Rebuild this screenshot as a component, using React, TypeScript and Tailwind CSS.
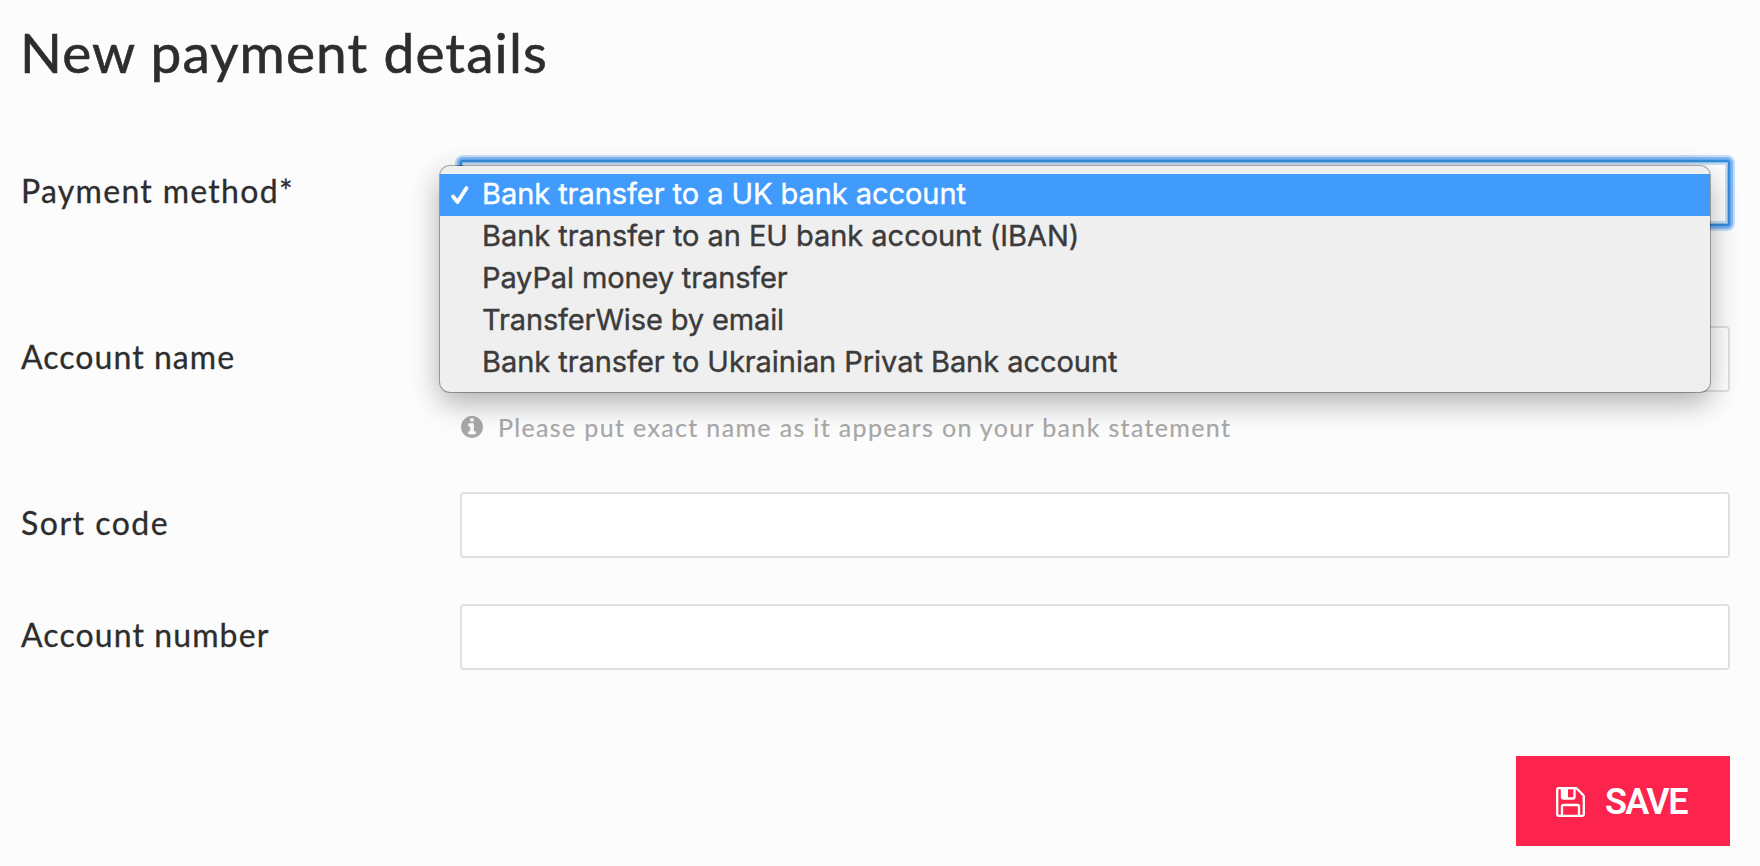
import React from 'react';

const methods = [
  { label: 'Bank transfer to a UK bank account', spacing: 'tracking-[-0.06px]' },
  { label: 'Bank transfer to an EU bank account (IBAN)', spacing: 'tracking-[-0.04px]' },
  { label: 'PayPal money transfer', spacing: 'tracking-[-0.13px]' },
  { label: 'TransferWise by email', spacing: 'tracking-[-0.13px]' },
  { label: 'Bank transfer to Ukrainian Privat Bank account', spacing: 'tracking-[-0.05px]' },
];

const InfoIcon: React.FC = () => (
  <svg viewBox="128 128 1536 1536" className="w-[22px] h-[22px]" fill="currentColor">
    <path d="M1152 1376v-160q0-14-9-23t-23-9h-96v-512q0-14-9-23t-23-9h-320q-14 0-23 9t-9 23v160q0 14 9 23t23 9h96v320h-96q-14 0-23 9t-9 23v160q0 14 9 23t23 9h448q14 0 23-9t9-23zm-128-896v-160q0-14-9-23t-23-9h-192q-14 0-23 9t-9 23v160q0 14 9 23t23 9h192q14 0 23-9t9-23zm640 416q0 209-103 385.5t-279.5 279.5-385.5 103-385.5-103-279.5-279.5-103-385.5 103-385.5 279.5-279.5 385.5-103 385.5 103 279.5 279.5 103 385.5z" />
  </svg>
);

const SaveIcon: React.FC = () => (
  <svg viewBox="0 0 29 30" className="w-[29px] h-[30px]" fill="none" stroke="currentColor" strokeWidth="2.300">
    <path d="M2.500 1.200H19.500Q20.500 1.200 21.200 2L27 7.800Q27.800 8.500 27.800 9.500V27.500Q27.800 28.800 26.500 28.800H2.500Q1.200 28.800 1.200 27.500V2.500Q1.200 1.200 2.500 1.200Z" />
    <path d="M6 1V10Q6 11.500 7.500 11.500H17Q18.500 11.500 18.500 10V1" />
    <path d="M6 29V19.500Q6 18 7.500 18H21.500Q23 18 23 19.500V29" />
    <path d="M7 2H12V11H7Z" fill="currentColor" stroke="none" />
  </svg>
);

const App: React.FC = () => {
  return (
    <div className="w-full h-[866px] bg-[#fcfcfc] text-[#2d2d2d] font-['Lato',sans-serif] overflow-hidden">
      <h1 className="h-[160px] pl-[20px] pt-[19px] text-[55px] leading-[66px] tracking-[1.1px] [-webkit-text-stroke:0.6px]">New payment details</h1>

      <div className="relative flex h-[166px] pl-[21px] pr-[30px]">
        <label className="w-[439px] shrink-0 pt-[11px] text-[32px] leading-[40px] tracking-[1.3px] [-webkit-text-stroke:0.3px]">Payment method*</label>
        <div className="flex-1 h-[66px] rounded-[3px] bg-white border-2 border-[#348edb] shadow-[0_0_0_1px_#65a9ef,0_0_0_3px_#80b7f3,0_0_0_5px_#c6def9,inset_0_0_0_1px_#8fbfea,inset_0_0_0_3px_#c8dff3]"></div>

        <ul className="absolute z-10 left-[440px] top-[6px] w-[1270px] h-[226px] py-[8px] rounded-[10px] bg-[#efefef] text-[#3b3b3b] font-['Inter',sans-serif] text-[29px] shadow-[0_0_0_1px_rgba(0,0,0,0.3),0_10px_30px_rgba(0,0,0,0.32)]">
          {methods.map((method, i) => (
            <li
              key={method.label}
              className={i === 0 ? 'flex items-center h-[42px] pb-[2px] bg-[#419bfc] text-white' : 'flex items-center h-[42px] pb-[2px]'}
            >
              <span className="w-[42px] pl-[10px] pt-[2px]">
                {i === 0 && (
                  <svg viewBox="0 0 20 20" className="w-[20px] h-[20px]" fill="none" stroke="currentColor" strokeWidth="3.800" strokeLinecap="round" strokeLinejoin="round">
                    <path d="M3 11.500L7.500 17L16.500 3" />
                  </svg>
                )}
              </span>
              <span className={`${method.spacing} [-webkit-text-stroke:0.4px]`}>{method.label}</span>
            </li>
          ))}
        </ul>
      </div>

      <div className="flex h-[166px] pl-[21px] pr-[30px]">
        <label className="w-[439px] shrink-0 pt-[11px] text-[32px] leading-[40px] tracking-[1.05px] [-webkit-text-stroke:0.3px]">Account name</label>
        <div className="flex-1">
          <div className="h-[66px] rounded-[4px] bg-white border-2 border-[#e0e0e0]"></div>
          <div className="flex items-center h-[32px] mt-[19px] pl-[1px] text-[#a8a8a8]">
            <InfoIcon />
            <p className="ml-[15px] text-[25px] leading-[32px] tracking-[1.35px] [-webkit-text-stroke:0.2px]">Please put exact name as it appears on your bank statement</p>
          </div>
        </div>
      </div>

      <div className="flex h-[112px] pl-[21px] pr-[30px]">
        <label className="w-[439px] shrink-0 pt-[11px] text-[32px] leading-[40px] tracking-[1.5px] [-webkit-text-stroke:0.3px]">Sort code</label>
        <div className="flex-1 h-[66px] rounded-[4px] bg-white border-2 border-[#e0e0e0]"></div>
      </div>

      <div className="flex h-[152px] pl-[21px] pr-[30px]">
        <label className="w-[439px] shrink-0 pt-[11px] text-[32px] leading-[40px] tracking-[1.1px] [-webkit-text-stroke:0.3px]">Account number</label>
        <div className="flex-1 h-[66px] rounded-[4px] bg-white border-2 border-[#e0e0e0]"></div>
      </div>

      <div className="flex justify-end pr-[30px]">
        <button className="flex items-center w-[214px] h-[90px] pl-[40px] pt-[2px] bg-[#fc244c] text-white">
          <SaveIcon />
          <span className="ml-[20px] font-['Roboto',sans-serif] font-semibold text-[36px] leading-[40px] tracking-[-1.6px]">SAVE</span>
        </button>
      </div>
    </div>
  );
};

export default App;
